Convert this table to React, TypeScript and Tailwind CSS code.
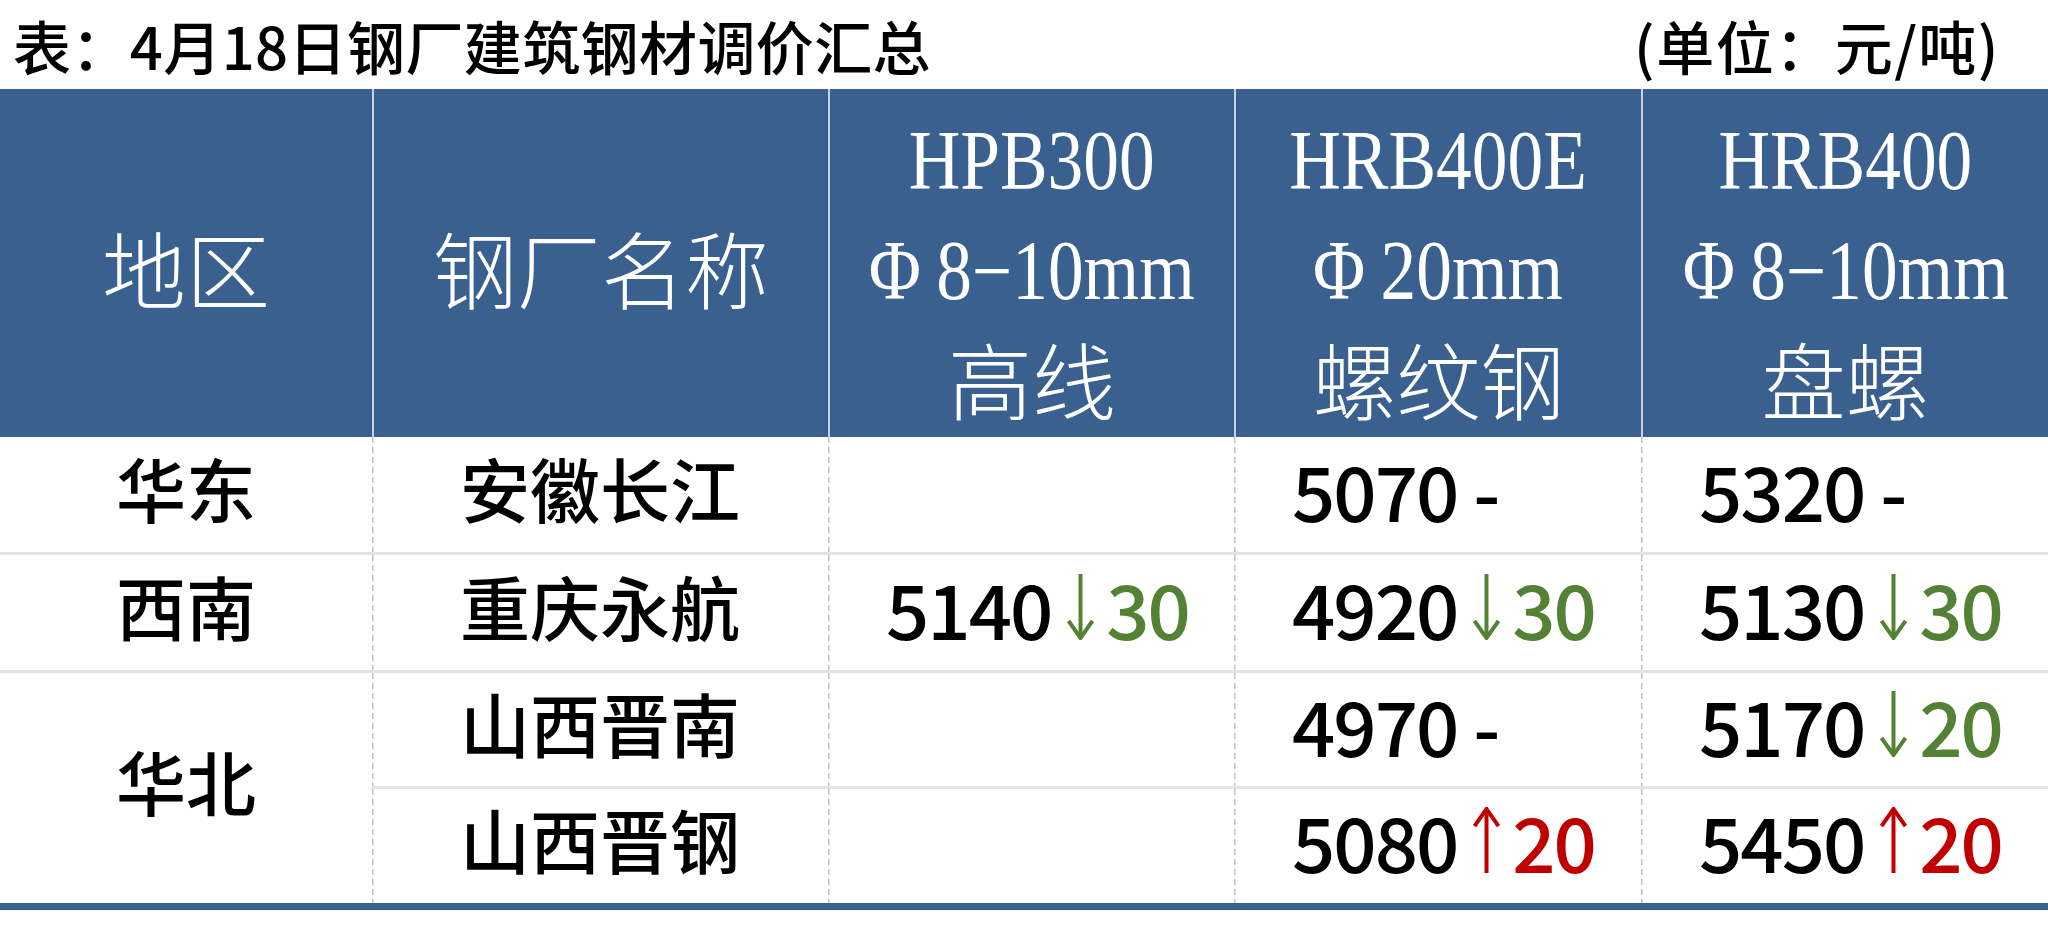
import React from "react";

const sans = "font-['Noto_Sans_CJK_SC','Noto_Sans',sans-serif]";

function Arrow({ dir }: { dir: "up" | "down" }) {
  const color = dir === "down" ? "#548235" : "#c00000";
  return (
    <svg width="27" height="66" viewBox="0 0 27 66" className="ml-[16px] mr-[12px] shrink-0">
      {dir === "down" ? (
        <g stroke={color} strokeWidth="4" fill="none" strokeLinecap="butt">
          <line x1="13.5" y1="0" x2="13.5" y2="63" />
          <polyline points="1.5,47 13.5,64 25.5,47" />
        </g>
      ) : (
        <g stroke={color} strokeWidth="4" fill="none" strokeLinecap="butt">
          <line x1="13.5" y1="3" x2="13.5" y2="66" />
          <polyline points="1.5,19 13.5,2 25.5,19" />
        </g>
      )}
    </svg>
  );
}

function Val({ n, d, dir }: { n: string; d?: string; dir?: "up" | "down" }) {
  return (
    <div className="flex h-full items-center pb-[12px] pl-[58px] font-medium text-black">
      <span className="text-[76px] leading-none tracking-[-2px]">{n}</span>
      {dir ? (
        <>
          <Arrow dir={dir} />
          <span
            className={
              dir === "down"
                ? "text-[76px] leading-none tracking-[-2px] text-[#548235]"
                : "text-[76px] leading-none tracking-[-2px] text-[#c00000]"
            }
          >
            {d}
          </span>
        </>
      ) : (
        <span className="ml-[16px] text-[76px] leading-none">-</span>
      )}
    </div>
  );
}

const vdash =
  "bg-[repeating-linear-gradient(to_bottom,#c2c2c2_0_6px,transparent_6px_10px)] bg-no-repeat bg-[length:1.5px_100%] bg-left";

function Cell({
  children,
  first,
  top,
  className,
}: {
  children?: React.ReactNode;
  first?: boolean;
  top?: boolean;
  className?: string;
}) {
  return (
    <div
      className={
        (first ? "" : vdash + " ") +
        (top ? "border-t-[3px] border-[#dde4ec] " : "") +
        (className ?? "")
      }
    >
      {children}
    </div>
  );
}

function Name({ t }: { t: string }) {
  return (
    <div className="flex h-full items-center justify-center pb-[14px] text-[70px] font-medium leading-none text-black">
      {t}
    </div>
  );
}

function Lat({ children }: { children: React.ReactNode }) {
  return (
    <span className="inline-block scale-x-[0.85] font-['Liberation_Serif',serif] text-[84px]">
      {children}
    </span>
  );
}

function HeadSpec({ a, b, c }: { a: string; b: string; c: string }) {
  return (
    <div className="flex h-full flex-col items-center justify-center pt-[16px] text-white">
      <div className="flex h-[110px] items-center justify-center leading-none">
        <Lat>{a}</Lat>
      </div>
      <div className="flex h-[110px] items-center justify-center leading-none">
        <Lat>
          <span className="mr-[18px]">Φ</span>
          {b}
        </Lat>
      </div>
      <div className="flex h-[110px] items-center justify-center pb-[6px] text-[84px] font-light leading-none">
        {c}
      </div>
    </div>
  );
}

export default function App() {
  return (
    <div className={"h-[926px] w-[2048px] overflow-hidden bg-white " + sans}>
      <div className="flex h-[89px] items-center justify-between pl-[13px] pr-[48px] text-[58px] font-medium leading-none tracking-[0.4px] text-black">
        <div>表：4月18日钢厂建筑钢材调价汇总</div>
        <div className="tracking-[1.5px]">(单位：元/吨)</div>
      </div>
      <div className="grid grid-cols-[372px_456px_406px_407px_407px] grid-rows-[348px_115px_118px_116px_117px]">
        {/* header */}
        <div className="flex items-center justify-center bg-[#3a6090] pt-[8px] text-[84px] font-light leading-none text-white">
          地区
        </div>
        <div className="flex items-center justify-center border-l-2 border-[#c7d3e2] bg-[#3a6090] pt-[8px] text-[84px] font-light leading-none text-white">
          钢厂名称
        </div>
        <div className="border-l-2 border-[#c7d3e2] bg-[#3a6090]">
          <HeadSpec a="HPB300" b="8−10mm" c="高线" />
        </div>
        <div className="border-l-2 border-[#c7d3e2] bg-[#3a6090]">
          <HeadSpec a="HRB400E" b="20mm" c="螺纹钢" />
        </div>
        <div className="border-l-2 border-[#c7d3e2] bg-[#3a6090]">
          <HeadSpec a="HRB400" b="8−10mm" c="盘螺" />
        </div>

        {/* row 1 */}
        <Cell first>
          <Name t="华东" />
        </Cell>
        <Cell>
          <Name t="安徽长江" />
        </Cell>
        <Cell />
        <Cell>
          <Val n="5070" />
        </Cell>
        <Cell>
          <Val n="5320" />
        </Cell>

        {/* row 2 */}
        <Cell first top>
          <Name t="西南" />
        </Cell>
        <Cell top>
          <Name t="重庆永航" />
        </Cell>
        <Cell top>
          <Val n="5140" d="30" dir="down" />
        </Cell>
        <Cell top>
          <Val n="4920" d="30" dir="down" />
        </Cell>
        <Cell top>
          <Val n="5130" d="30" dir="down" />
        </Cell>

        {/* row 3 */}
        <Cell first top className="row-span-2">
          <Name t="华北" />
        </Cell>
        <Cell top>
          <Name t="山西晋南" />
        </Cell>
        <Cell top />
        <Cell top>
          <Val n="4970" />
        </Cell>
        <Cell top>
          <Val n="5170" d="20" dir="down" />
        </Cell>

        {/* row 4 */}
        <Cell top>
          <Name t="山西晋钢" />
        </Cell>
        <Cell top />
        <Cell top>
          <Val n="5080" d="20" dir="up" />
        </Cell>
        <Cell top>
          <Val n="5450" d="20" dir="up" />
        </Cell>
      </div>
      <div className="h-[7px] bg-[#3a6090]" />
    </div>
  );
}
